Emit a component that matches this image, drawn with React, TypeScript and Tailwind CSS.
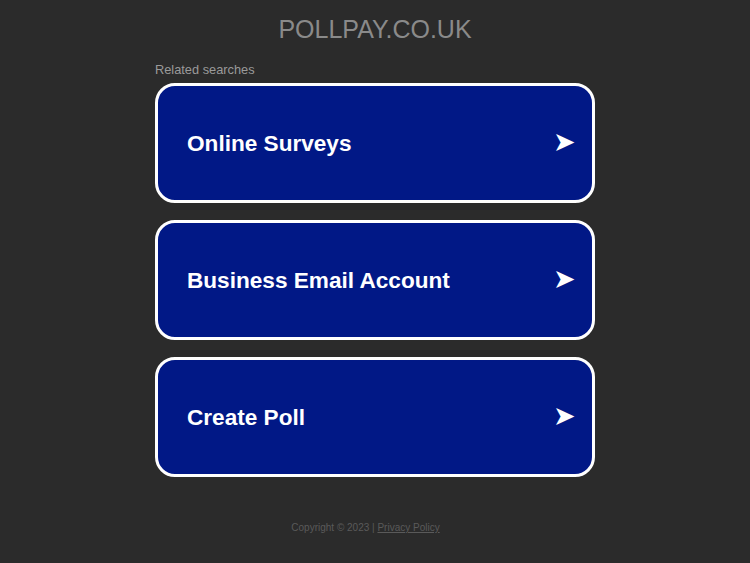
import React from "react";

const items = ["Online Surveys", "Business Email Account", "Create Poll"];

export default function App() {
  return (
    <div className="min-h-[563px] w-full bg-[#2b2b2b] flex flex-col items-center" style={{ fontFamily: '"Liberation Sans", Arial, sans-serif' }}>
      <div className="mt-[14px] text-[25px] leading-[30px] text-[#8a8a8a]">POLLPAY.CO.UK</div>
      <div className="w-[440px] mt-[18px]">
        <div className="text-[12.8px] leading-[15px] text-[#9a9a9a] mb-[6px]">Related searches</div>
        <div className="flex flex-col gap-[17px]">
          {items.map((t) => (
            <div key={t} className="h-[120px] rounded-[20px] border-[3px] border-white bg-[#011886] flex items-center justify-between pl-[29px] pr-[16px] pt-[2px]">
              <span className="text-[22.6px] font-bold text-white">{t}</span>
              <span className="text-[27px] leading-none text-white mb-[4px]">➤</span>
            </div>
          ))}
        </div>
      </div>
      <div className="mt-[43px] mr-[19px] text-[10px] text-[#5a5a5a]">
        Copyright © 2023 | <span className="underline">Privacy Policy</span>
      </div>
    </div>
  );
}
